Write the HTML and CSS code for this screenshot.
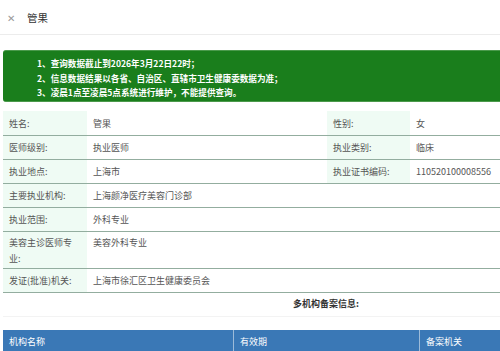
FILE: index.html
```html
<!DOCTYPE html>
<html lang="zh-CN">
<head>
    <meta charset="UTF-8">
    <meta name="viewport" content="width=device-width, initial-scale=1.0">
    <title>医师查询 - 管果</title>
    <link rel="stylesheet" href="styles.css">
</head>
<body>
    <!-- 顶部标题 -->
    <header class="top-bar">
        <span class="close">&#x2715;</span>
        <span class="title">管果</span>
    </header>

    <!-- 提示信息 -->
    <div class="notice">
        <p>1、查询数据截止到2026年3月22日22时；</p>
        <p>2、信息数据结果以各省、自治区、直辖市卫生健康委数据为准；</p>
        <p>3、凌晨1点至凌晨5点系统进行维护，不能提供查询。</p>
    </div>

    <!-- 医师信息 -->
    <table class="info">
        <colgroup>
            <col class="c-label">
            <col class="c-value">
            <col class="c-label2">
            <col class="c-value2">
        </colgroup>
        <tr>
            <th>姓名:</th><td>管果</td>
            <th>性别:</th><td>女</td>
        </tr>
        <tr>
            <th>医师级别:</th><td>执业医师</td>
            <th>执业类别:</th><td>临床</td>
        </tr>
        <tr>
            <th>执业地点:</th><td>上海市</td>
            <th>执业证书编码:</th><td>110520100008556</td>
        </tr>
        <tr>
            <th>主要执业机构:</th><td colspan="3">上海颜净医疗美容门诊部</td>
        </tr>
        <tr>
            <th>执业范围:</th><td colspan="3">外科专业</td>
        </tr>
        <tr class="tall">
            <th>美容主诊医师专业:</th><td colspan="3">美容外科专业</td>
        </tr>
        <tr>
            <th>发证(批准)机关:</th><td colspan="3">上海市徐汇区卫生健康委员会</td>
        </tr>
    </table>

    <!-- 多机构备案 -->
    <div class="multi-title">多机构备案信息:</div>
    <table class="multi">
        <tr>
            <th class="m-name">机构名称</th>
            <th class="m-date">有效期</th>
            <th>备案机关</th>
        </tr>
    </table>
</body>
</html>
```

FILE: styles.css
```css
/* 基本样式 */
body { margin: 0; font-family: "Noto Sans CJK SC", "Liberation Sans", sans-serif; font-size: 9px; color: #555; background-color: #fff; }
.top-bar { height: 35px; display: flex; align-items: center; padding-left: 7px; border-bottom: 1px solid #ececec; box-sizing: border-box; }
.top-bar .close { font-size: 10px; color: #999; width: 20px; font-weight: 300; }
.top-bar .title { font-size: 10.5px; color: #333; }

/* 绿色提示 */
.notice {
    margin: 15px 0 0 3px;
    height: 52px;
    box-sizing: border-box;
    background-color: #1a7e1c;
    border-top: 1px solid #4b9a4c;
    border-bottom: 1px solid #4b9a4c;
    border-radius: 3px 0 0 3px;
    color: #fff;
    padding: 5px 0 0 34px;
}
.notice p { margin: 0; line-height: 14.5px; font-size: 8.6px; font-weight: bold; }

/* 医师信息表格 */
.info { margin: 9px 0 0 3px; width: 497px; border-collapse: collapse; table-layout: fixed; }
.info .c-label { width: 84px; }
.info .c-value { width: 240px; }
.info .c-label2 { width: 83px; }
.info th, .info td { height: 23px; padding: 0 10px 0 6px; border-bottom: 1.5px solid #93ad9f; text-align: left; font-weight: normal; font-size: 9px; color: #555; vertical-align: middle; }
.info th { background-color: #effbf4; }
.info tr.tall th, .info tr.tall td { height: 37px; vertical-align: top; padding-top: 3px; line-height: 16px; box-sizing: border-box; }
.info tr:first-child th, .info tr:first-child td { height: 24px; }

/* 多机构备案 */
.multi-title { margin: 0 0 0 3px; width: 497px; height: 24px; line-height: 22px; padding-left: 290px; box-sizing: border-box; font-weight: bold; font-size: 9px; color: #333; border-bottom: 1px solid #f3f3f3; }
.multi { margin: 13px 0 0 3px; width: 497px; border-collapse: collapse; table-layout: fixed; }
.multi th { background-color: #3a78b6; color: #fff; font-weight: normal; text-align: left; height: 23px; padding: 0 0 0 6px; font-size: 9px; border-right: 1px solid #9cbbd9; }
.multi th:last-child { border-right: none; }
.multi .m-name { width: 224px; }
.multi .m-date { width: 179px; }
```
